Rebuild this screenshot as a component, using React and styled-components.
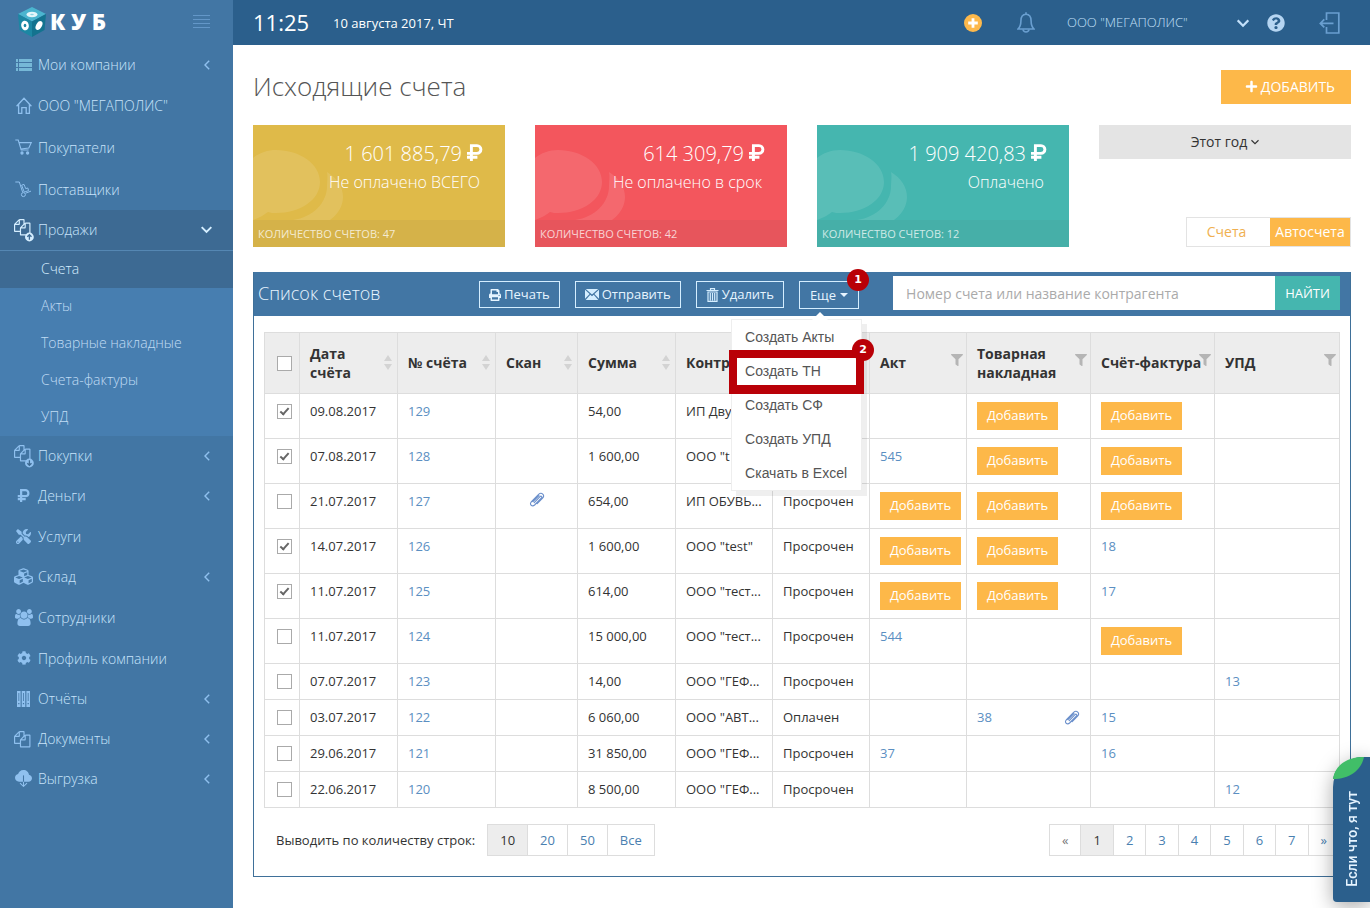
import React from "react";
import styled, { createGlobalStyle, css } from "styled-components";
import {
  FaCog,
  FaCubes,
  FaFilter,
  FaPlus,
  FaPrint,
  FaQuestionCircle,
  FaTools,
} from "react-icons/fa";
import { BsCloudDownloadFill } from "react-icons/bs";

const ListIcon = () => (
  <svg width="16" height="12" viewBox="0 0 16 12" fill="#7fc4e0">
    <path d="M0 0h2v3H0zM3 0h13v3H3zM0 4h2v4H0zM3 4h13v4H3zM0 9h2v3H0zM3 9h13v3H3z" opacity=".85" />
  </svg>
);

const HomeIcon = () => (
  <svg width="16" height="17" viewBox="0 0 16 17" fill="none" stroke="currentColor" strokeWidth="1.3">
    <path d="M.6 9.2 8 1.2l7.4 8M2.6 7.6v8.7h3.2v-5.6h4.4v5.6h3.2V7.6" />
  </svg>
);

const CartIcon = () => (
  <svg width="17" height="16" viewBox="0 0 17 16" fill="none" stroke="currentColor" strokeWidth="1.1">
    <path d="M.3 1h2.9l3 10h7.4M4 3.6h12.2L13.8 9l-8 1" />
    <circle cx="7" cy="14" r="1.1" fill="currentColor" />
    <circle cx="12.6" cy="14" r="1.1" fill="currentColor" />
  </svg>
);

const DollyIcon = () => (
  <svg width="17" height="17" viewBox="0 0 17 17" fill="none" stroke="currentColor" strokeWidth="1">
    <path d="M.3 1h4l3.4 10.4M10.6 12.2l5.4-2.1M6.6 4.2l2.4-.8.8 2 .9 2.2 2.1-.6.8 2.6-4.3 1.5z" />
    <circle cx="8.4" cy="13.6" r="2" />
  </svg>
);

const FilesIcon = ({ badge }) => (
  <svg width="20" height={badge ? 24 : 18} viewBox={badge ? "0 0 20 24" : "0 0 20 18"} fill="currentColor">
    <g transform="translate(0 1) scale(.0092)">
      <path d="M1696 384q40 0 68 28t28 68v1216q0 40-28 68t-68 28h-960q-40 0-68-28t-28-68v-288h-544q-40 0-68-28t-28-68v-672q0-40 20-88t48-76l408-408q28-28 76-48t88-20h416q40 0 68 28t28 68v328q68-40 128-40h416zm-544 213l-299 299h299v-299zm-640-384l-299 299h299v-299zm196 647l316-316v-416h-384v416q0 40-28 68t-68 28h-416v640h512v-256q0-40 20-88t48-76zm956 804v-1152h-384v416q0 40-28 68t-68 28h-416v640h896z" />
    </g>
    {badge && (
      <g>
        <circle cx="15.4" cy="19" r="4.4" />
        <path
          d={badge === "up" ? "M15.4 21.8v-5M13.3 18.8l2.1-2.1 2.1 2.1" : "M15.4 16.2v5M13.3 19.2l2.1 2.1 2.1-2.1"}
          fill="none"
          stroke="#3d6a93"
          strokeWidth="1.3"
        />
      </g>
    )}
  </svg>
);

const RubleIcon = ({ size }) => (
  <svg width={size} height={size} viewBox="0 0 17 17" fill="none" stroke="currentColor" strokeWidth="2.9">
    <path d="M5.400 17V1.600h5.600a3.900 3.900 0 0 1 0 7.800H1M1 13.200h10.400" />
  </svg>
);

const UsersIcon = () => (
  <svg width="18" height="17" viewBox="0 0 1920 1792" fill="currentColor">
    <path d="M593 896q-162 5-265 128h-134q-82 0-138-40.500t-56-118.500q0-353 124-353 6 0 43.500 21t97.500 42.500 119 21.500q67 0 133-23-5 37-5 66 0 139 81 256zm1071 637q0 120-73 189.500t-194 69.500h-874q-121 0-194-69.500t-73-189.500q0-53 3.500-103.500t14-109 26.500-108.500 43-97.500 62-81 85.500-53.500 111.500-20q10 0 43 21.500t73 48 107 48 135 21.500 135-21.500 107-48 73-48 43-21.500q61 0 111.500 20t85.500 53.500 62 81 43 97.500 26.500 108.500 14 109 3.500 103.500zm-1024-1277q0 106-75 181t-181 75-181-75-75-181 75-181 181-75 181 75 75 181zm704 384q0 159-112.500 271.500t-271.500 112.500-271.500-112.500-112.500-271.500 112.500-271.500 271.500-112.500 271.500 112.500 112.500 271.500zm576 225q0 78-56 118.500t-138 40.500h-134q-103-123-265-128 81-117 81-256 0-29-5-66 66 23 133 23 59 0 119-21.500t97.500-42.500 43.500-21q124 0 124 353zm-128-609q0 106-75 181t-181 75-181-75-75-181 75-181 181-75 181 75 75 181z" />
  </svg>
);

const BooksIcon = () => (
  <svg width="13" height="16" viewBox="0 0 13 16" fill="currentColor">
    <path d="M0 0h3.6v16H0zM4.7 0h3.6v16H4.7zM9.4 0H13v16H9.4z" />
    <path d="M1.8 2v8M6.5 2v8M11.2 2v8" stroke="#4276a4" strokeWidth=".8" />
    <path d="M1.2 12.6h1.2M5.9 12.6h1.2M10.6 12.6h1.2" stroke="#4276a4" strokeWidth="1.2" />
  </svg>
);

const CubeLogo = () => (
  <svg width="28" height="30" viewBox="0 0 28 30">
    <path d="M14 0 28 7 14 14.500 0 7z" fill="#4bb5cf" />
    <path d="M0 7l14 7.500V30L1.500 23z" fill="#1c87a3" />
    <path d="M28 7l-14 7.500V30l12.500-7z" fill="#13738f" />
    <ellipse cx="14" cy="7.500" rx="5.500" ry="2.800" fill="#e4f6fa" />
    <ellipse cx="14" cy="7.500" rx="1.800" ry=".8" fill="#8ed6e4" />
    <ellipse cx="7" cy="18.500" rx="3.800" ry="4.800" fill="#fff" transform="rotate(-12 7 18.500)" />
    <ellipse cx="7" cy="18.500" rx="1.300" ry="1.800" fill="#1c87a3" />
    <ellipse cx="21" cy="18.500" rx="2.900" ry="4.800" fill="#fff" transform="rotate(28 21 18.500)" />
  </svg>
);

const BarsIcon = () => (
  <svg width="17" height="14" viewBox="0 0 17 14" stroke="#6397c8" strokeWidth="1">
    <path d="M0 .5h17M0 4.500h17M0 8.500h17M0 12.500h17" />
  </svg>
);

const Chevron = ({ dir, size = 9, width = 1.5 }) => (
  <svg width={size} height={size} viewBox="0 0 10 10" fill="none" stroke="currentColor" strokeWidth={width}>
    <path d={dir === "left" ? "M7.200.8 3 5l4.200 4.200" : "M.6 2.800 5 7.200l4.400-4.400"} />
  </svg>
);

const AddCircleIcon = () => (
  <svg width="18" height="18" viewBox="0 0 18 18">
    <circle cx="9" cy="9" r="9" fill="#fdb94c" />
    <path d="M9 4.200v9.600M4.200 9h9.600" stroke="#fff" strokeWidth="2.800" />
  </svg>
);

const BellIcon = () => (
  <svg width="18" height="21" viewBox="0 0 18 21" fill="none" stroke="currentColor" strokeWidth="1.600">
    <path d="M1 17c2-1.800 2.900-3.500 2.900-8 0-4.300 1.600-6.800 5.100-6.800s5.100 2.500 5.100 6.800c0 4.500.9 6.200 2.900 8z" />
    <path d="M6 17.500c.5 3.300 5.500 3.300 6 0M9 .3v2" />
  </svg>
);

const ExitIcon = () => (
  <svg width="21" height="22" viewBox="0 0 21 22" fill="none" stroke="currentColor" strokeWidth="1.700">
    <path d="M7.500 8V1h12.300v20H7.500v-6M1.500 11.400h13M5.300 7.400l-4 4 4 4" />
  </svg>
);

const MailIcon = () => (
  <svg width="14" height="11" viewBox="0 0 14 11" fill="#d5eeff">
    <path d="M.8 0h12.400L7 5.600zM0 .8l4.600 4.300L0 9.800zM14 .8v9L9.400 5.100zM5.300 5.800 7 7.300l1.700-1.500L13.300 11H.7z" />
  </svg>
);

const TrashIcon = () => (
  <svg width="13" height="14" viewBox="0 0 12 14" fill="none" stroke="#d5eeff">
    <path d="M0 2.500h12M4 2.200V.6h4v1.600" strokeWidth="1.200" />
    <path d="M1.500 4v9.400h9V4zM3.800 5v7.400M6 5v7.400M8.200 5v7.400" strokeWidth="1.200" />
  </svg>
);

const ClipIcon = () => (
  <svg width="16" height="16" viewBox="0 0 16 16" fill="none" stroke="#6a8fcb" strokeWidth="1.100" strokeLinecap="round">
    <path d="M5.200 10.600 11 4.700c1.200-1.200 2.600.1 1.500 1.300l-6.900 7c-2.400 2.300-5.600-.6-3.400-3L9.600 2.400c3-2.800 6.700.7 4 3.700l-5.400 5.600M4 9.700l6-6" />
  </svg>
);

const SortIcon = () => (
  <svg width="8" height="15" viewBox="0 0 8 15" fill="#d3d3d3">
    <path d="M4 0l4 6H0zM4 15l4-6H0z" />
  </svg>
);

const BubblesIcon = () => (
  <svg width="92" height="95" viewBox="0 0 92 95" fill="#fff" fillOpacity=".11">
    <path d="M23 25c24 0 44 14 44 32S47 88 23 88c-3 0-5 0-8-1-4 3-9 6-15 8V33c6-5 14-8 23-8z" />
    <path d="M74 47c10 6 16 15 16 25 0 9-5 17-13 23H40c20-3 34-17 34-34 0-5 1-9 0-14z" />
  </svg>
);

const menu = [
  { label: "Мои компании", icon: <ListIcon />, arrow: true },
  { label: 'ООО "МЕГАПОЛИС"', icon: <HomeIcon />, tall: 41 },
  { label: "Покупатели", icon: <CartIcon />, tall: 43 },
  { label: "Поставщики", icon: <DollyIcon />, tall: 41 },
  {
    label: "Продажи",
    icon: <FilesIcon badge="up" />,
    arrow: true,
    children: ["Счета", "Акты", "Товарные накладные", "Счета-фактуры", "УПД"],
  },
  { label: "Покупки", icon: <FilesIcon badge="down" />, arrow: true },
  { label: "Деньги", icon: <RubleIcon size={13} />, arrow: true },
  { label: "Услуги", icon: <FaTools size={15} />, tall: 41 },
  { label: "Склад", icon: <FaCubes size={19} />, arrow: true },
  { label: "Сотрудники", icon: <UsersIcon />, tall: 41 },
  { label: "Профиль компании", icon: <FaCog size={14} />, tall: 41 },
  { label: "Отчёты", icon: <BooksIcon />, arrow: true },
  { label: "Документы", icon: <FilesIcon />, arrow: true },
  { label: "Выгрузка", icon: <BsCloudDownloadFill size={17} />, arrow: true },
];

const stats = [
  { sum: "1 601 885,79", label: "Не оплачено ВСЕГО", count: 47, color: "#dfba49" },
  { sum: "614 309,79", label: "Не оплачено в срок", count: 42, color: "#f3565d" },
  { sum: "1 909 420,83", label: "Оплачено", count: 12, color: "#45b6af" },
];

const columns = [
  { key: "date", title: "Дата счёта", width: 98, tool: "sort" },
  { key: "num", title: "№ счёта", width: 98, tool: "sort" },
  { key: "scan", title: "Скан", width: 82, tool: "sort" },
  { key: "sum", title: "Сумма", width: 98, tool: "sort" },
  { key: "who", title: "Контр", width: 97 },
  { key: "status", title: "", width: 97 },
  { key: "act", title: "Акт", width: 97, tool: "filter" },
  { key: "tn", title: "Товарная накладная", width: 124, tool: "filter" },
  { key: "sf", title: "Счёт-фактура", width: 124, tool: "filter" },
  { key: "upd", title: "УПД", width: 125, tool: "filter" },
];

const ADD = "Добавить";

const invoices = [
  { on: true, date: "09.08.2017", num: "129", sum: "54,00", who: "ИП Дву", tn: ADD, sf: ADD },
  { on: true, date: "07.08.2017", num: "128", sum: "1 600,00", who: 'ООО "t', act: "545", tn: ADD, sf: ADD },
  { date: "21.07.2017", num: "127", scan: true, sum: "654,00", who: "ИП ОБУВЬ...", status: "Просрочен", act: ADD, tn: ADD, sf: ADD },
  { on: true, date: "14.07.2017", num: "126", sum: "1 600,00", who: 'ООО "test"', status: "Просрочен", act: ADD, tn: ADD, sf: "18" },
  { on: true, date: "11.07.2017", num: "125", sum: "614,00", who: 'ООО "тест...', status: "Просрочен", act: ADD, tn: ADD, sf: "17" },
  { date: "11.07.2017", num: "124", sum: "15 000,00", who: 'ООО "тест...', status: "Просрочен", act: "544", sf: ADD },
  { date: "07.07.2017", num: "123", sum: "14,00", who: 'ООО "ГЕФ...', status: "Просрочен", upd: "13" },
  { date: "03.07.2017", num: "122", sum: "6 060,00", who: 'ООО "АВТ...', status: "Оплачен", tn: "38", tnFile: true, sf: "15" },
  { date: "29.06.2017", num: "121", sum: "31 850,00", who: 'ООО "ГЕФ...', status: "Просрочен", act: "37", sf: "16" },
  { date: "22.06.2017", num: "120", sum: "8 500,00", who: 'ООО "ГЕФ...', status: "Просрочен", upd: "12" },
];

const moreItems = ["Создать Акты", "Создать ТН", "Создать СФ", "Создать УПД", "Скачать в Excel"];

function Sidebar() {
  return (
    <Side>
      <Brand>
        <BrandLink href="#">
          <CubeLogo />К У Б
        </BrandLink>
        <BarsButton aria-label="Свернуть меню">
          <BarsIcon />
        </BarsButton>
      </Brand>
      <nav>
        {menu.map((item) => (
          <React.Fragment key={item.label}>
            <MenuLink href="#" $height={item.tall} $open={Boolean(item.children)}>
              <MenuIcon>{item.icon}</MenuIcon>
              <MenuText>{item.label}</MenuText>
              {item.arrow && (
                <Chevron dir={item.children ? "down" : "left"} size={item.children ? 11 : 10} width={item.children ? 1.8 : 1.4} />
              )}
            </MenuLink>
            {item.children && (
              <SubMenu>
                {item.children.map((name, i) => (
                  <SubLink href="#" key={name} $active={i === 0}>
                    {name}
                  </SubLink>
                ))}
              </SubMenu>
            )}
          </React.Fragment>
        ))}
      </nav>
    </Side>
  );
}

function TopBar() {
  return (
    <Top>
      <Clock>11:25</Clock>
      <Today>10 августа 2017, ЧТ</Today>
      <TopTools>
        <IconButton aria-label="Создать">
          <AddCircleIcon />
        </IconButton>
        <IconButton aria-label="Уведомления" $left={35}>
          <BellIcon />
        </IconButton>
        <Company>
          ООО "МЕГАПОЛИС"
          <Chevron dir="down" size={12} width={1.8} />
        </Company>
        <IconButton aria-label="Помощь" $light $left={18}>
          <FaQuestionCircle size={18} />
        </IconButton>
        <IconButton aria-label="Выход" $left={34}>
          <ExitIcon />
        </IconButton>
      </TopTools>
    </Top>
  );
}

function DocCell({ value, file }) {
  return (
    <Td>
      {value === ADD && <AddDoc>{ADD}</AddDoc>}
      {value && value !== ADD && (
        <CellRow>
          <DocLink href="#">{value}</DocLink>
          {file && <ClipIcon />}
        </CellRow>
      )}
    </Td>
  );
}

function InvoiceTable() {
  return (
    <Table>
      <colgroup>
        <Col $width={35} />
        {columns.map((c) => (
          <Col key={c.key} $width={c.width} />
        ))}
      </colgroup>
      <thead>
        <tr>
          <Th $check>
            <Check type="checkbox" aria-label="Выбрать все" />
          </Th>
          {columns.map((c) => (
            <Th key={c.key}>
              <HeadRow $filter={c.tool === "filter"}>
                {c.title}
                {c.tool === "sort" && <SortIcon />}
                {c.tool === "filter" && <FaFilter size={12} />}
              </HeadRow>
            </Th>
          ))}
        </tr>
      </thead>
      <tbody>
        {invoices.map((row) => (
          <tr key={row.num}>
            <Td $check>
              <Check type="checkbox" defaultChecked={row.on} aria-label={`Счёт ${row.num}`} />
            </Td>
            <Td>{row.date}</Td>
            <Td>
              <DocLink href="#">{row.num}</DocLink>
            </Td>
            <Td $center>{row.scan && <ClipIcon />}</Td>
            <Td>{row.sum}</Td>
            <Td>{row.who}</Td>
            <Td>{row.status}</Td>
            <DocCell value={row.act} />
            <DocCell value={row.tn} file={row.tnFile} />
            <DocCell value={row.sf} />
            <DocCell value={row.upd} />
          </tr>
        ))}
      </tbody>
    </Table>
  );
}

function App() {
  return (
    <Page>
      <GlobalStyle />
      <Sidebar />
      <Body>
        <TopBar />
        <Main>
          <TitleRow>
            <Title>Исходящие счета</Title>
            <AddButton>
              <FaPlus size={13} />
              ДОБАВИТЬ
            </AddButton>
          </TitleRow>
          <Cards>
            {stats.map((s) => (
              <Card key={s.color} $color={s.color}>
                <Bubbles>
                  <BubblesIcon />
                </Bubbles>
                <CardBody>
                  <CardSum>
                    {s.sum}
                    <RubleIcon size={17} />
                  </CardSum>
                  <div>{s.label}</div>
                </CardBody>
                <CardFoot>КОЛИЧЕСТВО СЧЕТОВ: {s.count}</CardFoot>
              </Card>
            ))}
            <Filters>
              <Period>
                Этот год
                <Chevron dir="down" size={8} width={1.4} />
              </Period>
              <Switch>
                <SwitchButton>Счета</SwitchButton>
                <SwitchButton $active>Автосчета</SwitchButton>
              </Switch>
            </Filters>
          </Cards>
          <Panel>
            <PanelHead>
              <PanelTitle>Список счетов</PanelTitle>
              <Actions>
                <ActionButton>
                  <FaPrint size={12} />
                  Печать
                </ActionButton>
                <ActionButton>
                  <MailIcon />
                  Отправить
                </ActionButton>
                <ActionButton>
                  <TrashIcon />
                  Удалить
                </ActionButton>
                <More>
                  <ActionButton $tall>
                    Еще
                    <Caret />
                  </ActionButton>
                  <Step>1</Step>
                  <MoreMenu>
                    {moreItems.map((name, i) => (
                      <MoreItem key={name}>
                        <a href="#">{name}</a>
                        {i === 1 && (
                          <Highlight>
                            <Step>2</Step>
                          </Highlight>
                        )}
                      </MoreItem>
                    ))}
                  </MoreMenu>
                </More>
              </Actions>
              <Search>
                <SearchInput aria-label="Поиск" placeholder="Номер счета или название контрагента" />
                <SearchButton>НАЙТИ</SearchButton>
              </Search>
            </PanelHead>
            <PanelBody>
              <InvoiceTable />
              <Footer>
                <span>Выводить по количеству строк:</span>
                <Pager>
                  {["10", "20", "50", "Все"].map((n) => (
                    <PageLink href="#" key={n} $active={n === "10"}>
                      {n}
                    </PageLink>
                  ))}
                </Pager>
                <Pager $right>
                  {["«", "1", "2", "3", "4", "5", "6", "7", "»"].map((n) => (
                    <PageLink href="#" key={n} $active={n === "1"} $muted={n === "«"}>
                      {n}
                    </PageLink>
                  ))}
                </Pager>
              </Footer>
            </PanelBody>
          </Panel>
        </Main>
      </Body>
      <ChatTab>
        <Leaf width="37" height="22" viewBox="0 0 37 22">
          <path d="M0 22C3 8 15 0 37 0v22z" fill="#2b5f8c" />
          <path d="M0 22C2 8 14 0 31 0 28 14 16 22 0 22z" fill="#41be68" />
        </Leaf>
        <ChatText>Если что, я тут</ChatText>
      </ChatTab>
    </Page>
  );
}

const GlobalStyle = createGlobalStyle`
  *, *::before {
    box-sizing: border-box;
  }
  body {
    margin: 0;
    background: #fff;
    color: #333;
    font: 13px/19px "Open Sans", "Noto Sans", sans-serif;
  }
  button, input {
    margin: 0;
    padding: 0;
    border: 0;
    background: none;
    color: inherit;
    font: inherit;
  }
  a {
    color: inherit;
    text-decoration: none;
  }
  svg {
    flex-shrink: 0;
  }
`;
const Page = styled.div`
  display: flex;
  min-height: 100vh;
`;
const Side = styled.aside`
  flex: 0 0 233px;
  background: #4276a4;
`;
const Brand = styled.div`
  display: flex;
  align-items: center;
  justify-content: space-between;
  height: 45px;
  padding: 0 23px 2px 18px;
`;
const BrandLink = styled.a`
  display: flex;
  align-items: center;
  gap: 4px;
  color: #fff;
  font-size: 22px;
  font-weight: 800;
  white-space: pre;
`;
const BarsButton = styled.button`
  display: flex;
`;
const MenuLink = styled.a`
  display: flex;
  align-items: center;
  height: ${({ $height }) => $height || 40}px;
  padding: 0 21px 1px 13px;
  color: #8fc0ee;
  ${({ $open }) =>
    $open &&
    css`
      height: 41px;
      border-bottom: 1px solid #5587b3;
      background: #3d6a93;
      color: #d5eeff;
    `}
`;
const MenuIcon = styled.span`
  display: flex;
  flex: 0 0 21px;
  justify-content: center;
  margin-right: 4px;
`;
const MenuText = styled.span`
  flex: 1;
  color: #c8e4fb;
  font-size: 14px;
  font-weight: 300;
`;
const SubMenu = styled.div`
  background: #477eb0;
`;
const SubLink = styled.a`
  display: flex;
  align-items: center;
  height: 37px;
  padding: 0 0 2px 41px;
  background: ${({ $active }) => ($active ? "#3d6a93" : "none")};
  color: ${({ $active }) => ($active ? "#d5eeff" : "#c0dcf4")};
  font-size: 14px;
  font-weight: 300;
`;
const Body = styled.div`
  flex: 1;
  min-width: 0;
`;
const Top = styled.header`
  display: flex;
  align-items: center;
  height: 45px;
  padding: 0 30px 0 20px;
  background: #2b5f8c;
  color: #fff;
`;
const Clock = styled.span`
  padding-bottom: 2px;
  font-size: 22px;
  line-height: 30px;
`;
const Today = styled.span`
  margin-left: 24px;
  padding-top: 1px;
`;
const TopTools = styled.div`
  display: flex;
  align-items: center;
  margin-left: auto;
`;
const IconButton = styled.button`
  display: flex;
  margin-left: ${({ $left = 0 }) => $left}px;
  color: ${({ $light }) => ($light ? "#b5d5f2" : "#6a9fd0")};
`;
const Company = styled.button`
  display: flex;
  align-items: center;
  justify-content: space-between;
  width: 182px;
  margin-left: 32px;
  color: #c3e0fa;
  font-weight: 300;
`;
const Main = styled.main`
  padding: 25px 19px 31px 20px;
`;
const TitleRow = styled.div`
  display: flex;
  justify-content: space-between;
  height: 55px;
`;
const Title = styled.h1`
  margin: 0;
  color: #555;
  font-size: 26px;
  font-weight: 300;
  line-height: 32px;
`;
const AddButton = styled.button`
  display: flex;
  align-items: center;
  justify-content: flex-end;
  gap: 3px;
  width: 130px;
  height: 34px;
  padding: 0 16px 1px 0;
  background: #fdb849;
  color: #fff;
  font-size: 14px;
`;
const Cards = styled.div`
  display: grid;
  grid-template-columns: repeat(4, 1fr);
  gap: 30px;
`;
const Card = styled.section`
  position: relative;
  background: ${({ $color }) => $color};
  color: #fff;
`;
const Bubbles = styled.div`
  position: absolute;
  top: 0;
  left: 0;
`;
const CardBody = styled.div`
  height: 95px;
  padding: 13px 25px 0;
  font-size: 16px;
  font-weight: 300;
  line-height: 28px;
  text-align: right;
`;
const CardSum = styled.div`
  display: flex;
  align-items: center;
  justify-content: flex-end;
  gap: 4px;
  height: 30px;
  margin-right: -3px;
  padding-top: 2px;
  font-size: 20px;

  svg {
    margin-bottom: 3px;
  }
`;
const CardFoot = styled.div`
  height: 27px;
  padding: 0 5px;
  background: rgba(80, 80, 80, 0.07);
  color: rgba(255, 255, 255, 0.75);
  font-size: 11px;
  line-height: 27px;
`;
const Filters = styled.div`
  display: flex;
  flex-direction: column;
  align-items: flex-end;
  justify-content: space-between;
`;
const Period = styled.button`
  display: flex;
  align-items: center;
  justify-content: center;
  gap: 4px;
  width: 100%;
  height: 34px;
  padding-bottom: 1px;
  background: #e4e4e4;
  font-size: 14px;
`;
const Switch = styled.div`
  display: flex;
  border: 1px solid #e3e3e3;
`;
const SwitchButton = styled.button`
  width: ${({ $active }) => ($active ? 80 : 83)}px;
  height: 28px;
  padding: ${({ $active }) => ($active ? "0 0 2px" : "0 4px 2px 0")};
  background: ${({ $active }) => ($active ? "#fdb849" : "#fff")};
  color: ${({ $active }) => ($active ? "#fff" : "#f0b050")};
  font-size: 14px;
`;
const Panel = styled.section`
  margin-top: 25px;
  border: 1px solid #3f7099;
  border-top: 0;
`;
const PanelHead = styled.div`
  display: flex;
  height: 44px;
  padding: 4px 10px 0 4px;
  background: #4276a4;
  color: #fff;
`;
const PanelTitle = styled.h2`
  flex: 0 0 221px;
  margin: 0;
  color: #e6f4ff;
  font-size: 18px;
  font-weight: 300;
  line-height: 34px;
`;
const Actions = styled.div`
  display: flex;
  align-items: flex-start;
  gap: 15px;
  padding-top: 5px;
`;
const ActionButton = styled.button`
  display: flex;
  align-items: center;
  gap: 3px;
  height: ${({ $tall }) => ($tall ? 28 : 27)}px;
  padding: 0 ${({ $tall }) => ($tall ? 10 : 9)}px;
  border: 1px solid #d5eeff;
  color: #e6f4ff;
`;
const More = styled.div`
  position: relative;
`;
const Caret = styled.span`
  margin-left: 1px;
  border: 4px solid transparent;
  border-top-color: currentColor;
  border-bottom: 0;
`;
const Step = styled.span`
  position: absolute;
  top: -12px;
  right: -10px;
  width: 22px;
  height: 22px;
  border-radius: 50%;
  background: #b90007;
  color: #fff;
  font: bold 11px/22px "DejaVu Sans", sans-serif;
  text-align: center;
`;
const MoreMenu = styled.ul`
  position: absolute;
  z-index: 2;
  top: 38px;
  right: -3px;
  width: 131px;
  margin: 0;
  padding: 0;
  border: 1px solid #eee;
  background: #fff;
  box-shadow: 5px 5px rgba(102, 102, 102, 0.1);
  color: #555;
  font: 14px/34px "Liberation Sans", Arial, sans-serif;
  list-style: none;

  &::before {
    content: "";
    position: absolute;
    top: -8px;
    left: 80px;
    border: 8px solid transparent;
    border-top: 0;
    border-bottom-color: #fff;
  }
`;
const MoreItem = styled.li`
  position: relative;
  height: 34px;
  padding-left: 13px;
  white-space: nowrap;
`;
const Highlight = styled.div`
  position: absolute;
  inset: -4px -3px -6px;
  border: 8px solid #b90007;
  border-bottom-width: 9px;
  pointer-events: none;

  ${Step} {
    top: -19px;
    right: -18px;
  }
`;
const Search = styled.div`
  display: flex;
  flex: 1;
  height: 34px;
  margin-left: 34px;
`;
const SearchInput = styled.input`
  flex: 1;
  min-width: 0;
  padding: 0 13px;
  background: #fff;
  color: #333;
  font-size: 14px;

  &::placeholder {
    color: #aaa;
    opacity: 1;
  }
`;
const SearchButton = styled.button`
  width: 65px;
  background: #45b6af;
`;
const PanelBody = styled.div`
  padding: 16px 10px 20px;
`;
const Table = styled.table`
  width: 100%;
  border-collapse: collapse;
  table-layout: fixed;
`;
const Col = styled.col`
  width: ${({ $width }) => $width}px;
`;
const Th = styled.th`
  height: 61px;
  padding: ${({ $check }) => ($check ? "0 0 0 12px" : "0 5px 1px 10px")};
  border: 1px solid #ddd;
  background: #ededed;
  text-align: left;
`;
const HeadRow = styled.div`
  display: flex;
  align-items: center;
  justify-content: space-between;
  font-size: 14px;
  font-weight: 700;

  svg {
    margin: ${({ $filter }) => ($filter ? "0 -2px 6px -5px" : 0)};
    color: #b5b5b5;
  }
`;
const Td = styled.td`
  padding: ${({ $check }) => ($check ? "10px 0 0 12px" : "8px 10px")};
  border: 1px solid #ddd;
  overflow: hidden;
  text-align: ${({ $center }) => ($center ? "center" : "left")};
  vertical-align: top;
  white-space: nowrap;

  > svg {
    display: block;
    margin: 0 auto;
  }
`;
const Check = styled.input`
  display: block;
  position: relative;
  width: 15px;
  height: 15px;
  border: 1px solid #aaa;
  background: #fff;
  appearance: none;

  &:checked::before {
    content: "";
    position: absolute;
    top: 1px;
    left: 4px;
    width: 5px;
    height: 9px;
    border: solid #666;
    border-width: 0 2px 2px 0;
    transform: rotate(42deg);
  }
`;
const CellRow = styled.div`
  display: flex;
  align-items: center;
  justify-content: space-between;
  height: 19px;
`;
const DocLink = styled.a`
  color: #5b8fc2;
`;
const AddDoc = styled.button`
  display: block;
  width: 81px;
  height: 28px;
  padding-bottom: 2px;
  background: #fdb849;
  color: #fff;
`;
const Footer = styled.div`
  display: flex;
  align-items: center;
  gap: 12px;
  margin-top: 16px;
  padding-left: 12px;
`;
const Pager = styled.nav`
  display: flex;
  margin-left: ${({ $right }) => ($right ? "auto" : 0)};
  padding-left: 1px;
`;
const PageLink = styled.a`
  height: 32px;
  margin-left: -1px;
  padding: 0 12px;
  border: 1px solid #ddd;
  background: ${({ $active }) => ($active ? "#ededed" : "#fff")};
  color: ${({ $active, $muted }) => ($active ? "#333" : $muted ? "#777" : "#4a80b0")};
  line-height: 31px;
`;
const ChatTab = styled.button`
  position: fixed;
  right: 0;
  bottom: 6px;
  display: flex;
  flex-direction: column;
  align-items: center;
  width: 37px;
  height: 145px;
  border-radius: 30px 0 0 4px;
  background: #2b5f8c;
  box-shadow: 0 4px 20px rgba(0, 0, 0, 0.35);
`;
const Leaf = styled.svg`
  display: block;
`;
const ChatText = styled.span`
  margin-top: 12px;
  color: #e6f4ff;
  font: 500 14px/20px Roboto, sans-serif;
  writing-mode: vertical-rl;
  transform: rotate(180deg);
`;

export default App;
